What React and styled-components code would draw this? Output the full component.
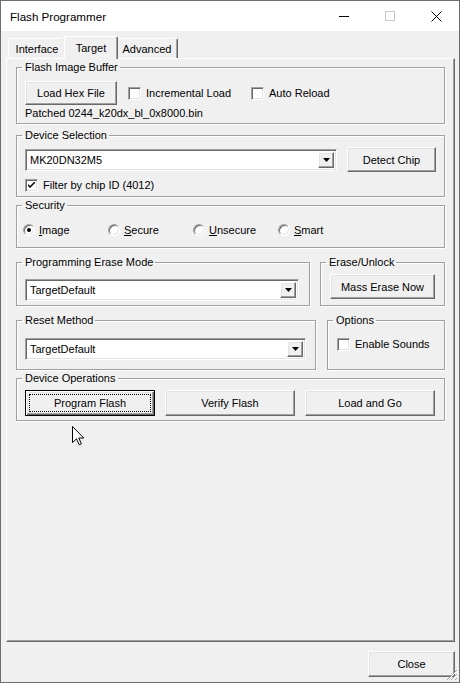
import React from 'react'
import styled, { createGlobalStyle, css } from 'styled-components'

const GlobalStyle = createGlobalStyle`
  html, body { margin: 0; padding: 0; }
  body {
    background: #f0f0f0;
    font-family: "Liberation Sans", Arial, sans-serif;
    font-size: 11px;
    color: #000;
  }
  *, *::before, *::after { box-sizing: border-box; }
`

const Window = styled.div`
  position: relative;
  width: 460px;
  height: 683px;
  display: flex;
  flex-direction: column;
  border: 1px solid #6e6e6e;
  background: #f0f0f0;
  overflow: hidden;
`

const TitleBar = styled.div`
  height: 30px;
  flex: none;
  display: flex;
  align-items: center;
  background: #fff;
`

const Title = styled.div`
  flex: 1;
  padding-left: 9px;
  font-size: 11.6px;
`

const CaptionButton = styled.div`
  width: 46px;
  height: 30px;
  display: flex;
  align-items: center;
  justify-content: center;
`

const Body = styled.div`
  flex: 1;
  display: flex;
  flex-direction: column;
  padding: 0 4px 0 5px;
`

const TabStrip = styled.div`
  height: 27px;
  flex: none;
  display: flex;
  align-items: flex-end;
  padding-left: 2px;
`

const Tab = styled.div`
  position: relative;
  z-index: 1;
  width: ${p => p.$w}px;
  height: 20px;
  display: flex;
  align-items: center;
  justify-content: center;
  background: #f0f0f0;
  border-top: 1px solid #fff;
  border-left: 1px solid #fff;
  border-right: 1px solid #696969;
  border-radius: 2px 2px 0 0;
  box-shadow: inset -1px 0 #a0a0a0;
  ${p => p.$active && css`
    z-index: 2;
    width: ${p.$w + 4}px;
    height: 23px;
    margin: 0 -2px -1px;
  `}
`

const Panel = styled.div`
  flex: 1;
  padding: 2px 9px 0;
  border-top: 1px solid #fff;
  border-left: 1px solid #fff;
  border-right: 1px solid #696969;
  border-bottom: 1px solid #696969;
  box-shadow: inset -1px -1px #a0a0a0;
`

const Footer = styled.div`
  height: 40px;
  flex: none;
  display: flex;
  justify-content: flex-end;
  align-items: flex-start;
  padding-top: 9px;
`

const Group = styled.fieldset`
  display: block;
  margin: ${p => p.$mt || 0}px 0 0;
  padding: 0;
  min-width: 0;
  border: 1px solid #a0a0a0;
  box-shadow: inset 1px 1px #fff, 1px 1px #fff;
  ${p => p.$w ? css`width: ${p.$w}px; flex: none;` : css`flex: 1;`}
`

const Legend = styled.legend`
  margin-left: 5px;
  padding: 0 2px 0 3px;
  line-height: 13px;
  font-size: 11px;
`

const GroupBody = styled.div`
  padding: ${p => p.$pad};
`

const SideBySide = styled.div`
  display: flex;
  gap: ${p => p.$gap}px;
  margin-top: ${p => p.$mt}px;
`

const Row = styled.div`
  display: flex;
  align-items: center;
  gap: ${p => p.$gap || 0}px;
  height: ${p => p.$h}px;
  margin-top: ${p => p.$mt || 0}px;
`

const Note = styled.div`
  margin-top: 2px;
  line-height: 13px;
`

const Btn = styled.button`
  flex: none;
  width: ${p => p.$w}px;
  height: ${p => p.$h || 25}px;
  padding: 0;
  display: flex;
  align-items: center;
  justify-content: center;
  font-family: inherit;
  font-size: 11px;
  color: #000;
  background: #f0f0f0;
  border: 1px solid;
  border-color: #fff #696969 #696969 #fff;
  box-shadow: inset -1px -1px #a0a0a0, inset 1px 1px #e3e3e3;
  ${p => p.$default && css`
    padding: 3px;
    border-color: #000;
    box-shadow: inset 1px 1px #fff, inset -1px -1px #696969, inset -2px -2px #a0a0a0, inset 2px 2px #e3e3e3;
  `}
`

const FocusLabel = styled.span`
  flex: 1;
  align-self: stretch;
  display: flex;
  align-items: center;
  justify-content: center;
  border: 1px dotted #000;
`

const Combo = styled.div`
  flex: 1;
  height: 22px;
  display: flex;
  background: #fff;
  border: 1px solid;
  border-color: #a0a0a0 #fff #fff #a0a0a0;
  box-shadow: inset 1px 1px #696969, inset -1px -1px #e3e3e3;
  padding: 1px;
`

const ComboText = styled.div`
  flex: 1;
  display: flex;
  align-items: center;
  padding-left: 3px;
`

const ComboArrow = styled.div`
  width: 16px;
  margin: 1px 1px 1px 0;
  display: flex;
  align-items: center;
  justify-content: center;
  background: #f0f0f0;
  border: 1px solid;
  border-color: #fff #696969 #696969 #fff;
  box-shadow: inset -1px -1px #a0a0a0, inset 1px 1px #e3e3e3;
`

const CheckLabel = styled.label`
  display: flex;
  align-items: center;
  gap: 5px;
  width: ${p => (p.$w ? `${p.$w}px` : 'auto')};
  margin-left: ${p => p.$ml || 0}px;
  line-height: 13px;
`

const Box = styled.span`
  width: 13px;
  height: 13px;
  flex: none;
  display: flex;
  align-items: center;
  justify-content: center;
  background: #fff;
  border: 1px solid;
  border-color: #a0a0a0 #fff #fff #a0a0a0;
  box-shadow: inset 1px 1px #696969, inset -1px -1px #e3e3e3;
`

const RadioLabel = styled.label`
  display: flex;
  align-items: center;
  gap: 4px;
  width: 85px;
  line-height: 13px;
`

const Circle = styled.span`
  width: 12px;
  height: 12px;
  flex: none;
  border-radius: 50%;
  display: flex;
  align-items: center;
  justify-content: center;
  background: #fff;
  border: 1px solid;
  border-color: #a0a0a0 #fff #fff #a0a0a0;
  box-shadow: inset 1px 1px #696969, inset -1px -1px #e3e3e3;
  &::after {
    content: '';
    display: ${p => (p.$on ? 'block' : 'none')};
    width: 4px;
    height: 4px;
    border-radius: 50%;
    background: #000;
  }
`

const Cursor = styled.svg`
  position: absolute;
  left: 71px;
  top: 425px;
`

const Grip = styled.svg`
  position: absolute;
  right: 1px;
  bottom: 1px;
`

function Check({ on }) {
  return (
    <Box>
      {on && (
        <svg width="7" height="7" viewBox="0 0 7 7">
          <path d="M0 2 L0 4 L2 6 L7 1 L7 -1 L2 4 Z" fill="#000" />
        </svg>
      )}
    </Box>
  )
}

function Select({ value }) {
  return (
    <Combo>
      <ComboText>{value}</ComboText>
      <ComboArrow>
        <svg width="7" height="4" viewBox="0 0 7 4">
          <path d="M0 0 H7 L3.5 4 Z" fill="#000" />
        </svg>
      </ComboArrow>
    </Combo>
  )
}

function Radio({ on, k, rest }) {
  return (
    <RadioLabel>
      <Circle $on={on} />
      <span><u>{k}</u>{rest}</span>
    </RadioLabel>
  )
}

export default function App() {
  return (
    <>
      <GlobalStyle />
      <Window>
        <TitleBar>
          <Title>Flash Programmer</Title>
          <CaptionButton>
            <svg width="10" height="10" viewBox="0 0 10 10">
              <path d="M0 5.5 H10" stroke="#000" strokeWidth="1" />
            </svg>
          </CaptionButton>
          <CaptionButton>
            <svg width="10" height="10" viewBox="0 0 10 10">
              <rect x="0.5" y="0.5" width="9" height="9" fill="none" stroke="#c8c8c8" />
            </svg>
          </CaptionButton>
          <CaptionButton>
            <svg width="11" height="11" viewBox="0 0 11 11">
              <path d="M0.5 0.5 L10.5 10.5 M10.5 0.5 L0.5 10.5" stroke="#000" strokeWidth="1" />
            </svg>
          </CaptionButton>
        </TitleBar>

        <Body>
          <TabStrip>
            <Tab $w={58}>Interface</Tab>
            <Tab $w={50} $active>Target</Tab>
            <Tab $w={62}>Advanced</Tab>
          </TabStrip>

          <Panel>
            <Group>
              <Legend>Flash Image Buffer</Legend>
              <GroupBody $pad="7px 8px 3px">
                <Row $h={24}>
                  <Btn $w={92} $h={24}>Load Hex File</Btn>
                  <CheckLabel $w={123} $ml={11}><Check />Incremental Load</CheckLabel>
                  <CheckLabel><Check />Auto Reload</CheckLabel>
                </Row>
                <Note>Patched 0244_k20dx_bl_0x8000.bin</Note>
              </GroupBody>
            </Group>

            <Group $mt={5}>
              <Legend>Device Selection</Legend>
              <GroupBody $pad="5px 8px 4px">
                <Row $h={25} $gap={10}>
                  <Select value="MK20DN32M5" />
                  <Btn $w={89}>Detect Chip</Btn>
                </Row>
                <Row $h={13} $mt={7}>
                  <CheckLabel><Check on />Filter by chip ID (4012)</CheckLabel>
                </Row>
              </GroupBody>
            </Group>

            <Group $mt={2}>
              <Legend>Security</Legend>
              <GroupBody $pad="8px 6px 7px">
                <Row $h={20}>
                  <Radio on k="I" rest="mage" />
                  <Radio k="S" rest="ecure" />
                  <Radio k="U" rest="nsecure" />
                  <Radio k="S" rest="mart" />
                </Row>
              </GroupBody>
            </Group>

            <SideBySide $gap={10} $mt={8}>
              <Group>
                <Legend>Programming Erase Mode</Legend>
                <GroupBody $pad="10px 10px 4px 8px">
                  <Row $h={22}>
                    <Select value="TargetDefault" />
                  </Row>
                </GroupBody>
              </Group>
              <Group $w={125}>
                <Legend>Erase/Unlock</Legend>
                <GroupBody $pad="5px 8px 4px 9px">
                  <Btn $w={105}>Mass Erase Now</Btn>
                </GroupBody>
              </Group>
            </SideBySide>

            <SideBySide $gap={11} $mt={8}>
              <Group>
                <Legend>Reset Method</Legend>
                <GroupBody $pad="11px 9px 9px 8px">
                  <Row $h={22}>
                    <Select value="TargetDefault" />
                  </Row>
                </GroupBody>
              </Group>
              <Group $w={118}>
                <Legend>Options</Legend>
                <GroupBody $pad="11px 8px 4px 9px">
                  <CheckLabel><Check />Enable Sounds</CheckLabel>
                </GroupBody>
              </Group>
            </SideBySide>

            <Group $mt={2}>
              <Legend>Device Operations</Legend>
              <GroupBody $pad="5px 8px 4px">
                <Row $h={26} $gap={10}>
                  <Btn $w={130} $h={26} $default><FocusLabel>Program Flash</FocusLabel></Btn>
                  <Btn $w={130} $h={26}>Verify Flash</Btn>
                  <Btn $w={130} $h={26}>Load and Go</Btn>
                </Row>
              </GroupBody>
            </Group>
          </Panel>

          <Footer>
            <Btn $w={87} $h={26}>Close</Btn>
          </Footer>
        </Body>

        <Cursor width="13" height="20" viewBox="0 0 13 20">
          <path
            d="M0.5 0.5 L0.5 16.5 L4.5 12.8 L7.2 18.8 L9.4 17.8 L6.8 12 L11.8 12 Z"
            fill="#fff"
            stroke="#000"
            strokeWidth="1"
            strokeLinejoin="miter"
          />
        </Cursor>

        <Grip width="12" height="12" viewBox="0 0 12 12">
          <path d="M11 1 L1 11 M11 5 L5 11 M11 9 L9 11" stroke="#a0a0a0" strokeWidth="1" />
          <path d="M12 1 L1 12 M12 5 L5 12" stroke="#fff" strokeWidth="1" />
        </Grip>
      </Window>
    </>
  )
}
